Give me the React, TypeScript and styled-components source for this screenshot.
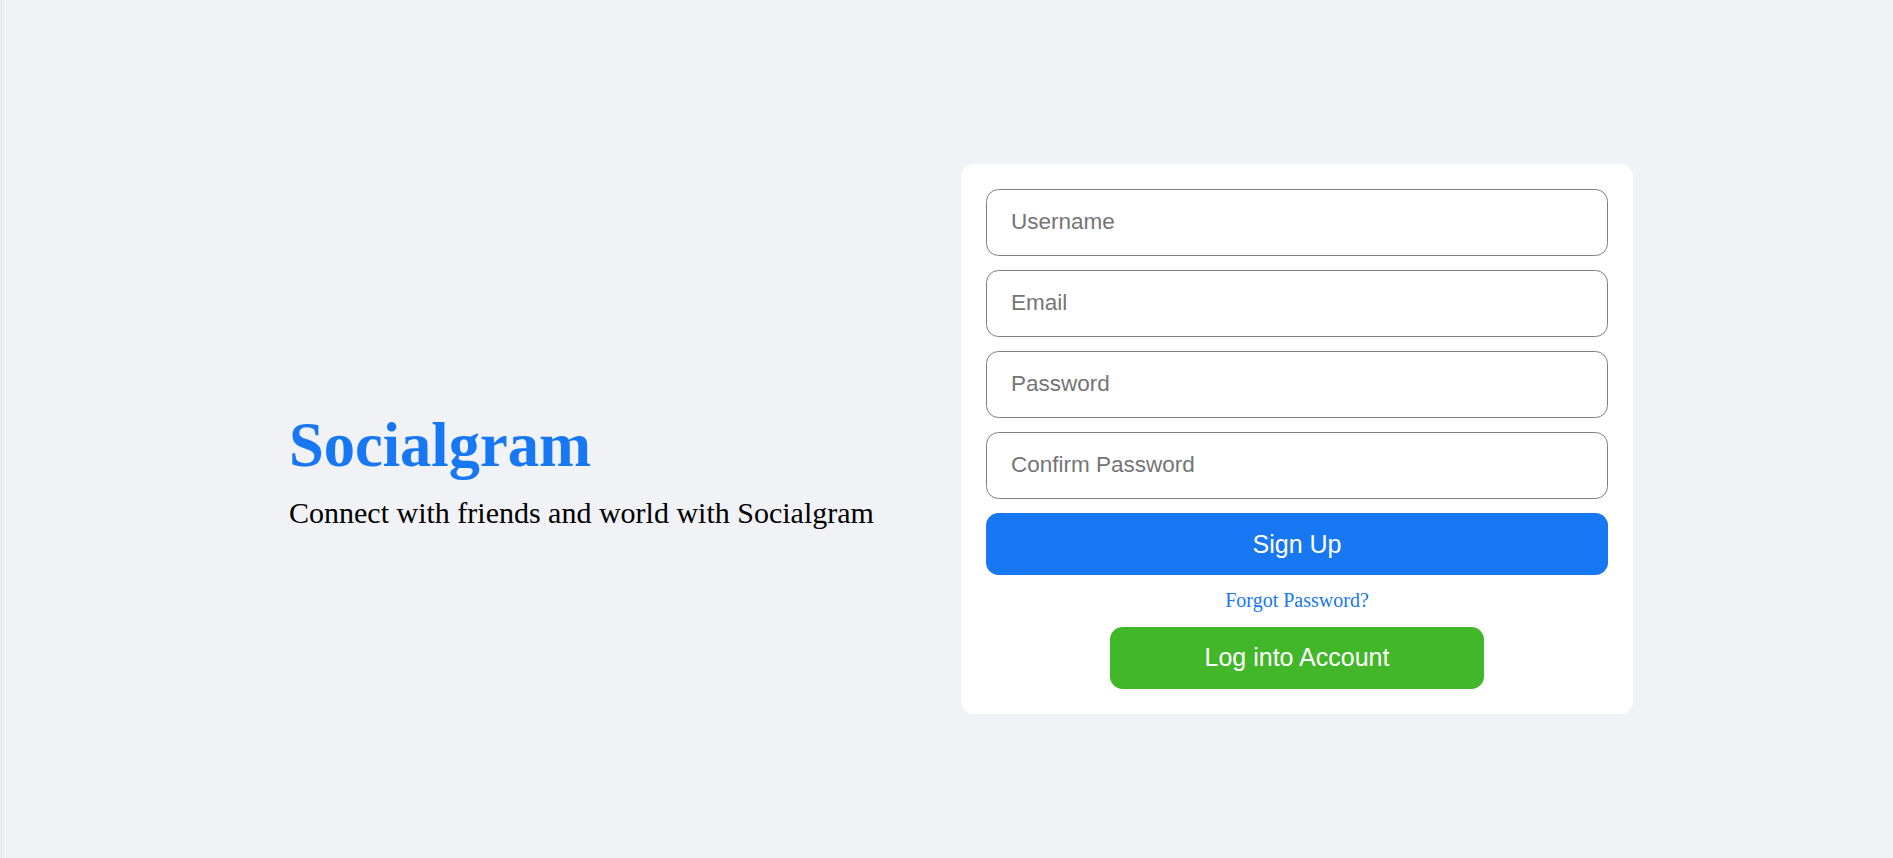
import React from "react";
import styled, { createGlobalStyle } from "styled-components";

const GlobalStyle = createGlobalStyle`
  * { box-sizing: border-box; }
  html, body { margin: 0; padding: 0; }
  body {
    font-family: "Liberation Serif", "Times New Roman", serif;
    background: #f0f2f5;
  }
`;

const Page = styled.div`
  width: 100%;
  height: 858px;
  background: linear-gradient(
    to right,
    #f0f2f5 1px,
    #e3e5e9 1px,
    #e3e5e9 2px,
    #f0f2f5 2px
  );
  display: flex;
  align-items: center;
  padding: 20px 0 0 289px;
`;

const Left = styled.div`
  flex: 0 0 672px;
  align-self: stretch;
  display: flex;
  flex-direction: column;
  justify-content: center;
  padding-top: 60px;
`;

const Logo = styled.h3`
  margin: 0 0 14px;
  font-family: "Liberation Serif", "Times New Roman", serif;
  font-size: 62.5px;
  line-height: 72px;
  font-weight: 700;
  color: #1877f2;
`;

const Tagline = styled.span`
  font-family: "Liberation Serif", "Times New Roman", serif;
  font-size: 30px;
  line-height: 35px;
  color: #000;
`;

const Box = styled.form`
  width: 672px;
  height: 550px;
  padding: 25px;
  background: #fff;
  border-radius: 12.5px;
  display: flex;
  flex-direction: column;
  align-items: stretch;
  gap: 14px;
`;

const Input = styled.input`
  height: 67px;
  border: 1px solid #808080;
  border-radius: 12.5px;
  padding: 0 24px 2px;
  font-family: "Liberation Sans", Arial, sans-serif;
  font-size: 22.5px;
  color: #000;
  background: #fff;
  outline: none;
  &::placeholder { color: #757575; }
`;

const Button = styled.button<{ $variant: "primary" | "success" }>`
  height: ${(p) => (p.$variant === "primary" ? "62px" : "62.5px")};
  width: ${(p) => (p.$variant === "primary" ? "100%" : "374px")};
  align-self: center;
  border: none;
  border-radius: 12.5px;
  background: ${(p) => (p.$variant === "primary" ? "#1877f2" : "#42b72a")};
  color: #fff;
  font-family: "Liberation Sans", Arial, sans-serif;
  font-size: 25px;
  font-weight: 500;
  cursor: pointer;
`;

const Forgot = styled.span`
  text-align: center;
  font-family: "Liberation Serif", "Times New Roman", serif;
  font-size: 20px;
  line-height: 23.5px;
  color: #1877f2;
  cursor: pointer;
`;

export default function App() {
  return (
    <>
      <GlobalStyle />
      <Page>
        <Left>
          <Logo>Socialgram</Logo>
          <Tagline>Connect with friends and world with Socialgram</Tagline>
        </Left>
        <Box onSubmit={(e) => e.preventDefault()}>
          <Input placeholder="Username" />
          <Input placeholder="Email" type="email" />
          <Input placeholder="Password" type="password" />
          <Input placeholder="Confirm Password" type="password" />
          <Button $variant="primary" type="submit">Sign Up</Button>
          <Forgot>Forgot Password?</Forgot>
          <Button $variant="success" type="button">Log into Account</Button>
        </Box>
      </Page>
    </>
  );
}
